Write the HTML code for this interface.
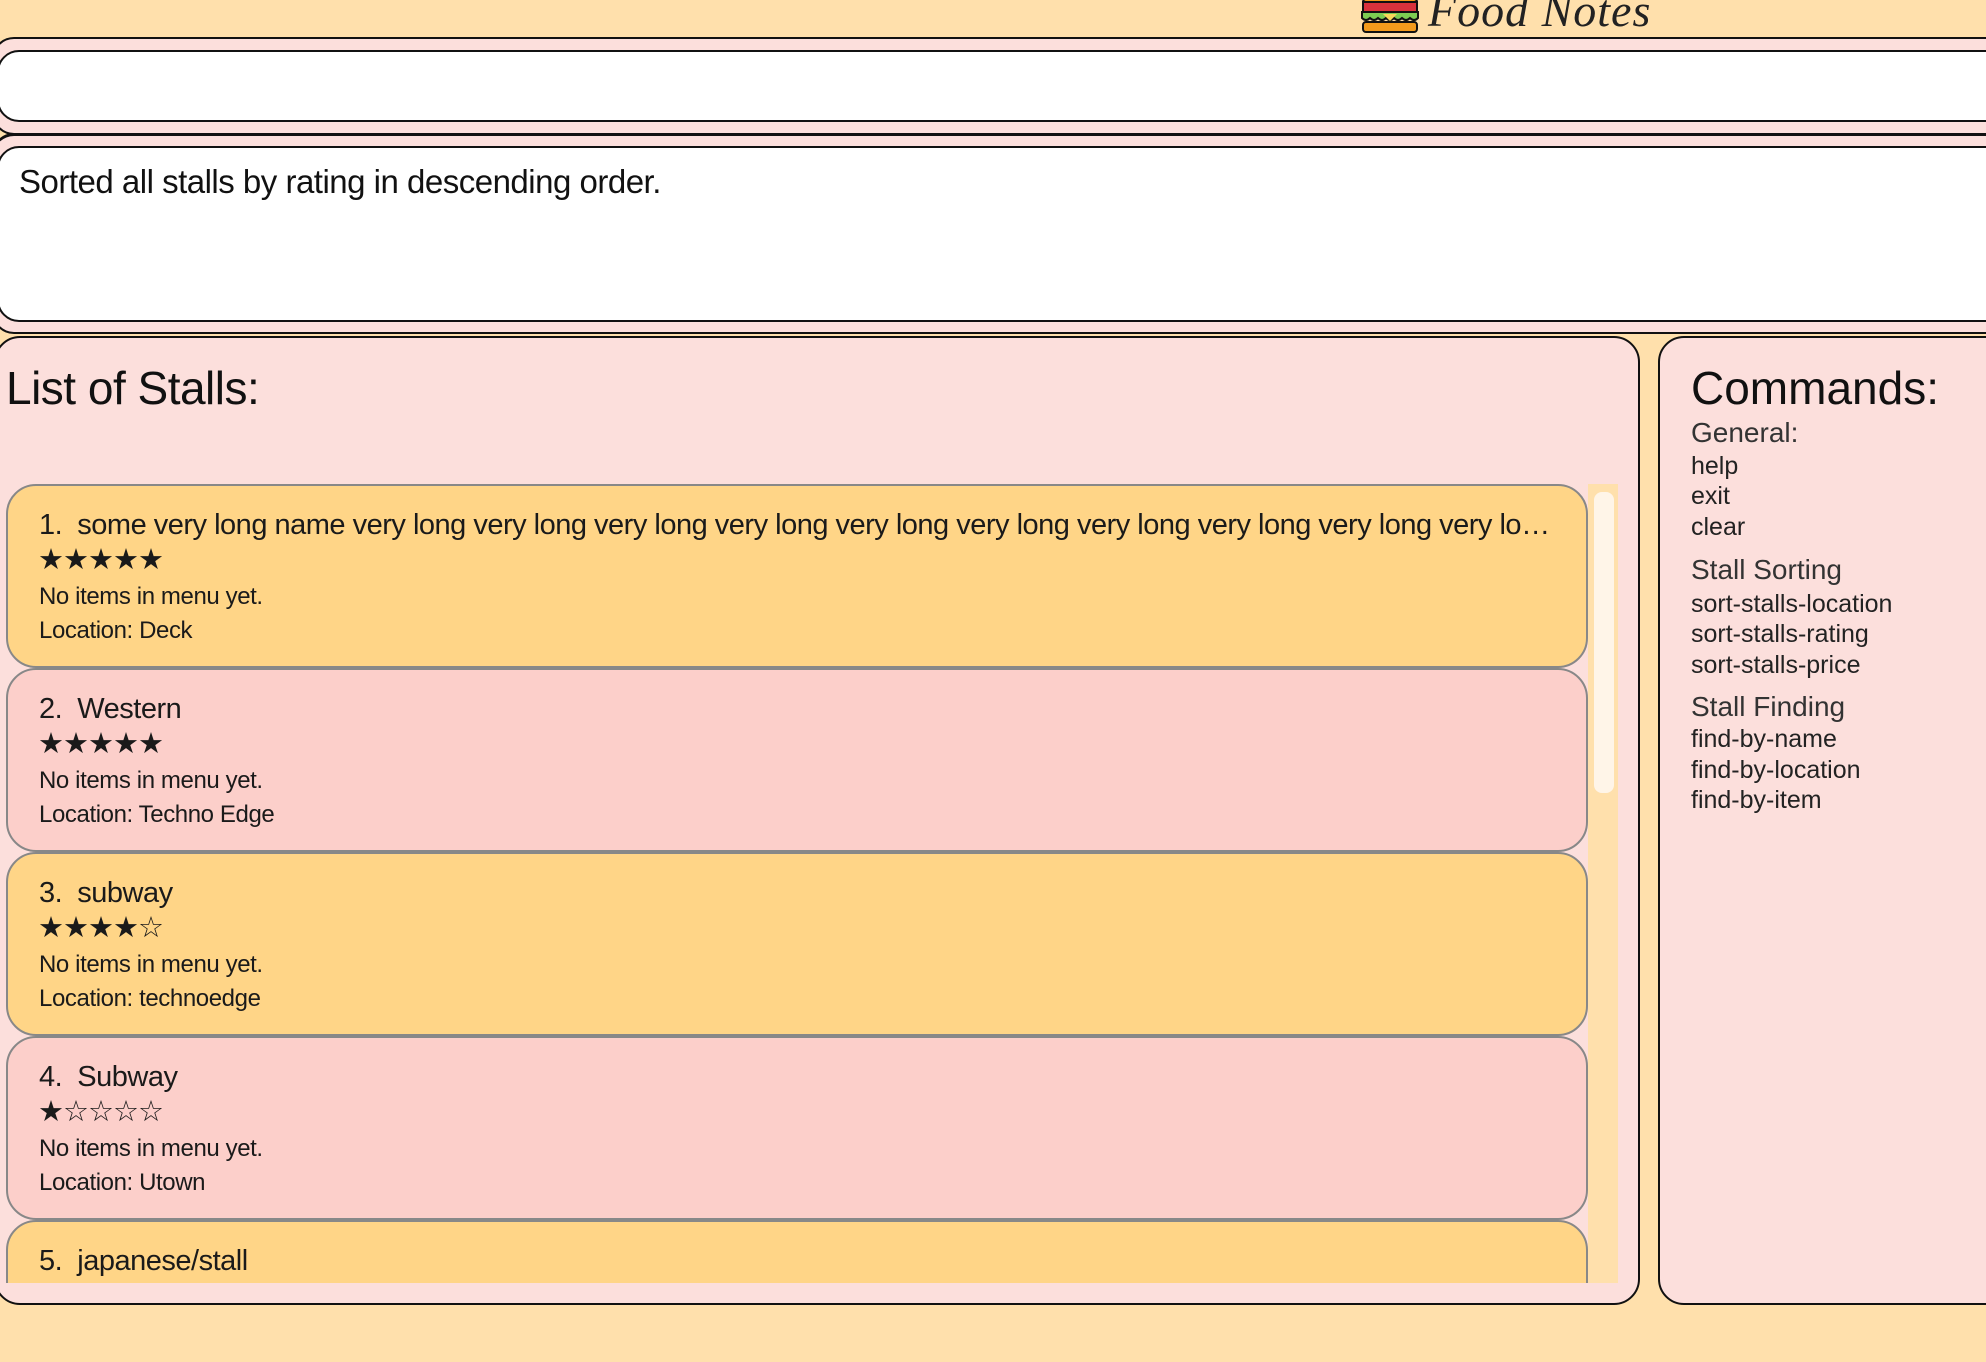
<!DOCTYPE html>
<html><head><meta charset="utf-8"><style>
*{box-sizing:border-box;margin:0;padding:0}
body{width:1986px;height:1362px;background:#FFE0AC;position:relative;overflow:hidden;font-family:"Liberation Sans",sans-serif;color:#1a1a1a}
.a{position:absolute}
.box{position:absolute;border:2px solid #111;background:#FCDFDC}
.white{background:#fff}
.card{position:absolute;left:0;width:1582px;height:184px;border:2px solid #888;border-radius:30px;padding-left:32px}
.y{background:#FFD587}.p{background:#FCCFCA}
.t{position:absolute;left:31px;top:23px;font-size:29px;white-space:nowrap;overflow:hidden;text-overflow:ellipsis;width:1515px;letter-spacing:-0.5px}
.s{position:absolute;left:30px;top:56px;font-size:29px;letter-spacing:-1px;font-family:"DejaVu Sans",sans-serif}
.n{position:absolute;left:31px;top:97px;font-size:24px;letter-spacing:-0.4px}
.l{position:absolute;left:31px;top:131px;font-size:24px;letter-spacing:-0.4px}
.cmd{position:absolute;left:1691px;font-size:25px;color:#222;white-space:nowrap}
.h{font-size:28px;color:#333}
</style></head><body>
<svg class="a" style="left:1361px;top:-8px" width="58" height="42" viewBox="0 0 58 42">
<rect x="2" y="0" width="54" height="10" rx="3" fill="#f39a1c" stroke="#111" stroke-width="2"/>
<rect x="2" y="10" width="54" height="10" fill="#d8323c" stroke="#111" stroke-width="2"/>
<path d="M1 20 h56 v6 q-4 4 -8 0 q-4 4 -8 0 q-4 4 -8 0 q-4 4 -8 0 q-4 4 -8 0 q-4 4 -8 0 q-4 4 -8 0z" fill="#7ccc52" stroke="#111" stroke-width="2"/>
<path d="M22 22 l7 7 l7 -7z" fill="#f7d55a"/>
<rect x="2" y="30" width="54" height="10" rx="3" fill="#f39a1c" stroke="#111" stroke-width="2"/>
</svg>
<div class="a" style="left:1428px;top:-16px;font-family:'Liberation Serif',serif;font-style:italic;font-size:46px;color:#222;letter-spacing:1px">Food Notes</div>

<div class="box" style="left:-8px;top:37px;width:2100px;height:98px;border-radius:22px"></div>
<div class="box white" style="left:-3px;top:50px;width:2100px;height:72px;border-radius:22px"></div>
<div class="box" style="left:-8px;top:133px;width:2100px;height:201px;border-radius:22px;border-top-width:3px"></div>
<div class="box white" style="left:-3px;top:146px;width:2100px;height:176px;border-radius:22px"></div>
<div class="a" style="left:19px;top:163px;font-size:33px;color:#111;letter-spacing:-0.5px">Sorted all stalls by rating in descending order.</div>

<div class="box" style="left:-6px;top:336px;width:1646px;height:969px;border-radius:26px"></div>
<div class="a" style="left:6px;top:361px;font-size:46px;color:#111;letter-spacing:-0.5px">List of Stalls:</div>
<div class="a" style="left:1588px;top:484px;width:30px;height:799px;background:#FFE0AC"></div>
<div class="a" style="left:1594px;top:492px;width:20px;height:301px;background:#FFF5E8;border-radius:8px"></div>
<div class="a" style="left:6px;top:484px;width:1582px;height:799px;overflow:hidden">
<div class="card y" style="top:0"><div class="t">1.&nbsp; some very long name very long very long very long very long very long very long very long very long very long very long very long</div><div class="s">★★★★★</div><div class="n">No items in menu yet.</div><div class="l">Location: Deck</div></div>
<div class="card p" style="top:184px"><div class="t">2.&nbsp; Western</div><div class="s">★★★★★</div><div class="n">No items in menu yet.</div><div class="l">Location: Techno Edge</div></div>
<div class="card y" style="top:368px"><div class="t">3.&nbsp; subway</div><div class="s">★★★★☆</div><div class="n">No items in menu yet.</div><div class="l">Location: technoedge</div></div>
<div class="card p" style="top:552px"><div class="t">4.&nbsp; Subway</div><div class="s">★☆☆☆☆</div><div class="n">No items in menu yet.</div><div class="l">Location: Utown</div></div>
<div class="card y" style="top:736px"><div class="t">5.&nbsp; japanese/stall</div></div>
</div>

<div class="box" style="left:1658px;top:336px;width:400px;height:969px;border-radius:26px"></div>
<div class="cmd" style="top:361px;font-size:46px;color:#111">Commands:</div>
<div class="cmd h" style="top:417px">General:</div>
<div class="cmd" style="top:452px">help</div>
<div class="cmd" style="top:482px">exit</div>
<div class="cmd" style="top:513px">clear</div>
<div class="cmd h" style="top:554px">Stall Sorting</div>
<div class="cmd" style="top:590px">sort-stalls-location</div>
<div class="cmd" style="top:620px">sort-stalls-rating</div>
<div class="cmd" style="top:651px">sort-stalls-price</div>
<div class="cmd h" style="top:691px">Stall Finding</div>
<div class="cmd" style="top:725px">find-by-name</div>
<div class="cmd" style="top:756px">find-by-location</div>
<div class="cmd" style="top:786px">find-by-item</div>
</body></html>
